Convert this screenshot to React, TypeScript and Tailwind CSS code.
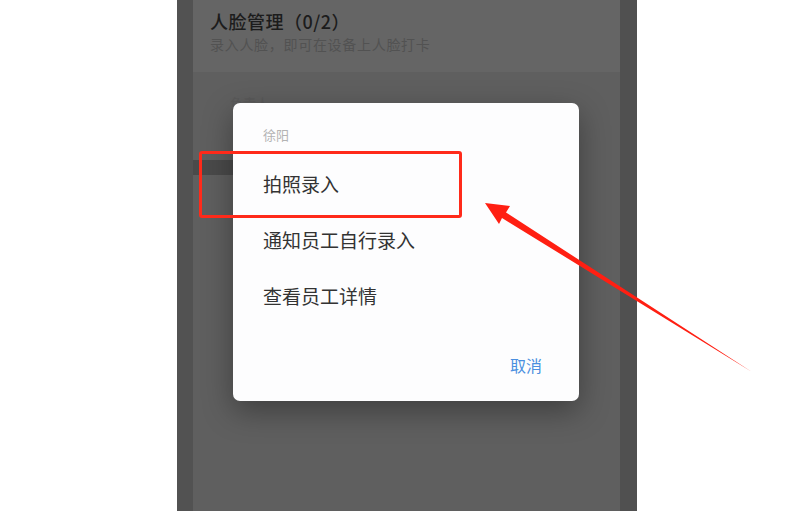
import React from 'react';

const cjk = { fontFamily: '"Noto Sans CJK SC", "Noto Sans", sans-serif' };

const ActionSheet: React.FC = (): JSX.Element => {
  const items = ['拍照录入', '通知员工自行录入', '查看员工详情'];

  return (
    <div className="absolute left-[233px] top-[103px] flex h-[298px] w-[346px] flex-col rounded-[7px] bg-[#fdfdfe] shadow-[0_10px_30px_rgba(0,0,0,0.35)]">
      <p className="pl-[30px] pt-[23px] text-[13px] leading-[18px] text-[#b3b3b3]">徐阳</p>
      <ul className="mt-[30px] flex flex-col gap-[36px] pl-[30px]">
        {items.map((item) => (
          <li key={item} className="text-[19px] leading-[20px] text-[#333333]">
            {item}
          </li>
        ))}
      </ul>
      <div className="mt-auto flex justify-end pb-[26px] pr-[37px]">
        <button className="text-[16px] leading-[20px] text-[#4a8fe0]">取消</button>
      </div>
    </div>
  );
};

const Arrow: React.FC = (): JSX.Element => (
  <svg className="pointer-events-none absolute left-0 top-0" width="799" height="511" viewBox="0 0 799 511">
    <polygon points="485,203 510,206 506,212.5 752,372 502,218 499,224" fill="#ff1f12" />
  </svg>
);

export default function App(): JSX.Element {
  return (
    <div className="relative flex h-[511px] w-[799px] overflow-hidden bg-white" style={cjk}>
      <div className="ml-[177px] flex h-full w-[460px]">
        <div className="h-full w-[16px] bg-[#525252]" />
        <div className="flex h-full flex-1 flex-col bg-[#5f5f5f]">
          <div className="h-[72px] bg-[#656565] pl-[17px] pt-[8px]">
            <h1 className="text-[18px] font-medium leading-[26px] tracking-[0.5px] text-[#1c1c1c]">人脸管理（0/2）</h1>
            <p className="mt-[1px] text-[14px] leading-[18px] tracking-[0.7px] text-[#525252]">录入人脸，即可在设备上人脸打卡</p>
          </div>
          <div className="pl-[37px] pt-[22px] text-[13px] leading-[18px] text-[#595959]">负责人</div>
          <div className="mt-[48px] h-[15px] w-[40px] bg-[#4a4a4a]" />
        </div>
        <div className="h-full w-[17px] bg-[#505050]" />
      </div>

      <ActionSheet />

      <div className="absolute left-[199px] top-[151px] h-[67px] w-[263px] rounded-[3px] border-[3px] border-[#ff2a1a]" />

      <Arrow />
    </div>
  );
}
